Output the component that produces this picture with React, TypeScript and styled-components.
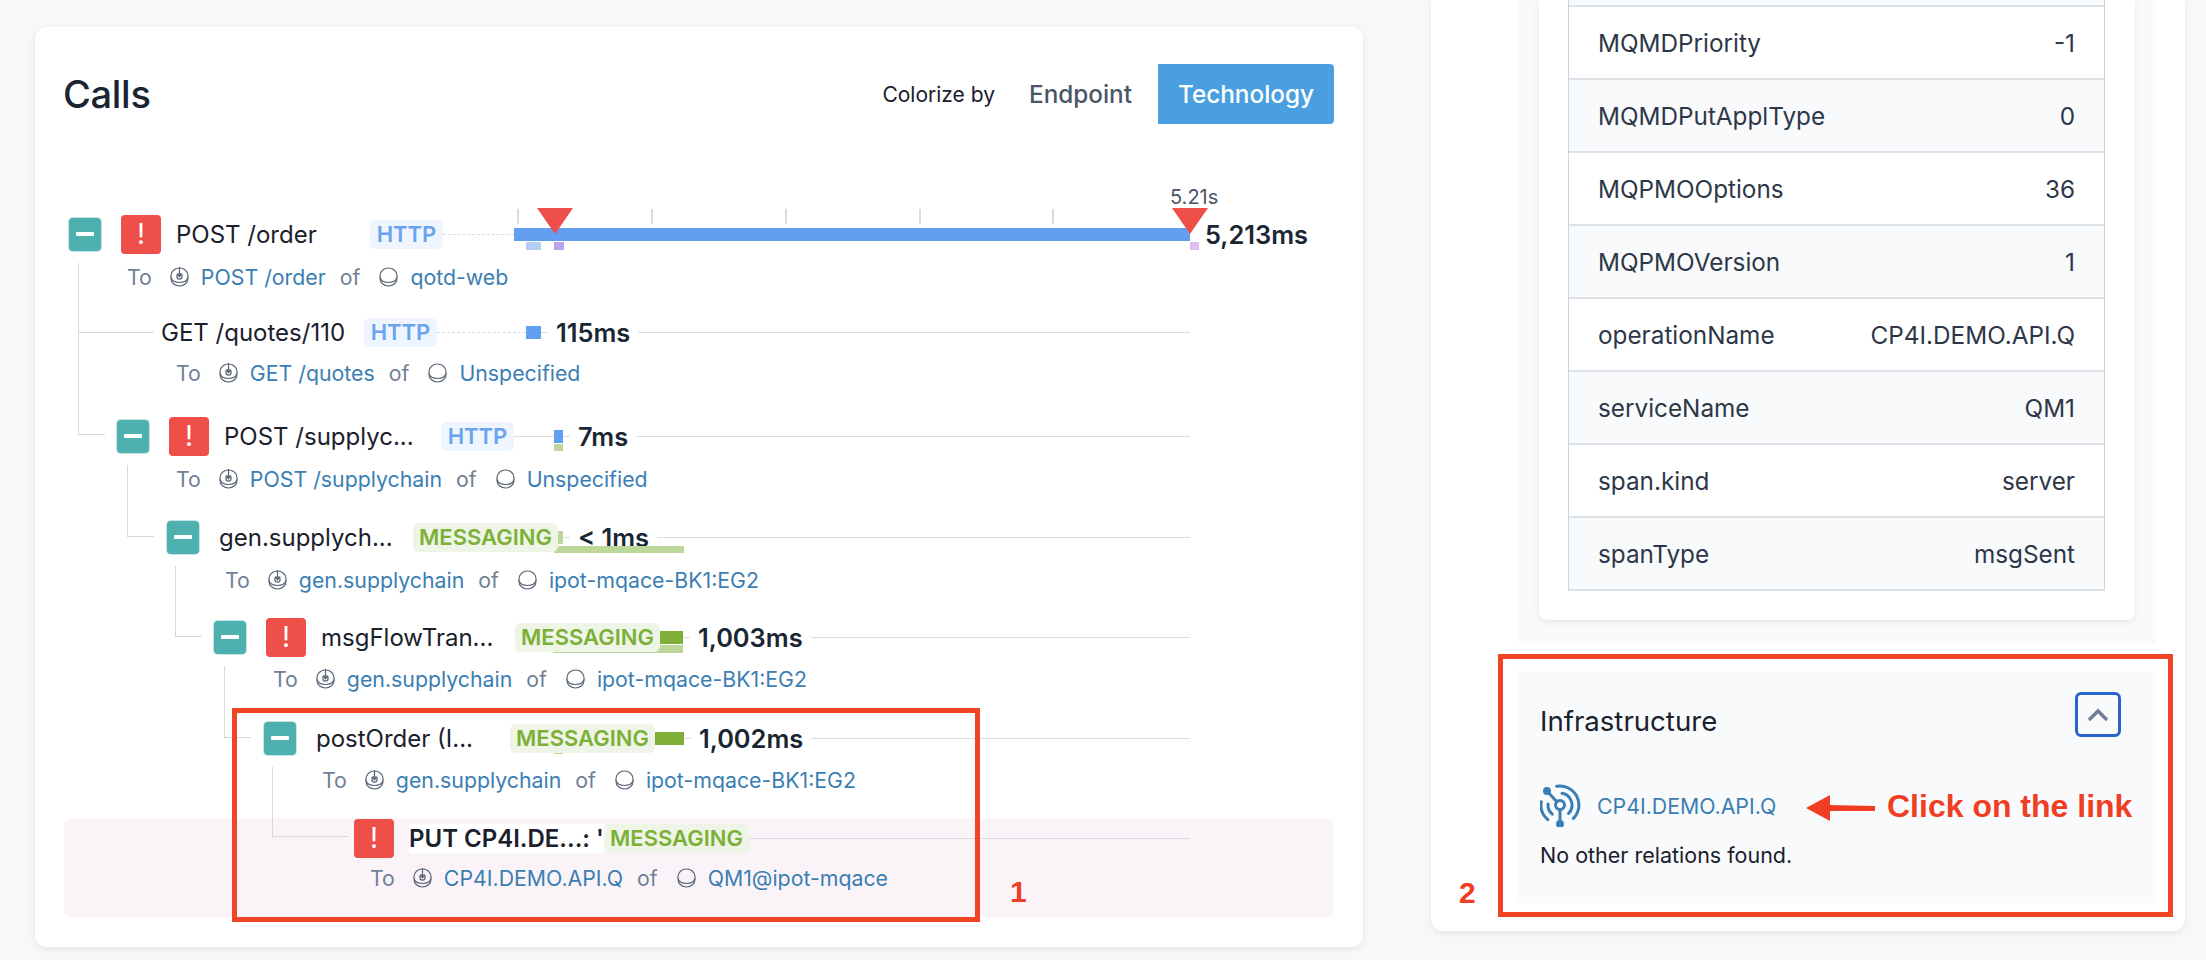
import styled, { createGlobalStyle } from "styled-components";

const GlobalStyle = createGlobalStyle`
  html, body { margin: 0; padding: 0; }
  body {
    background: #f7f8fa;
    font-family: Inter, "Noto Sans", sans-serif;
    color: #1a202c;
    overflow: hidden;
  }
  * { box-sizing: border-box; }
`;

interface Mark {
  left: number;
  top: number;
  width: number;
  height: number;
  color: string;
}

interface Call {
  indent: number;
  collapsible?: boolean;
  error?: boolean;
  name: string;
  nameWidth: number;
  strongName?: boolean;
  tech: "HTTP" | "MESSAGING";
  lead?: number;
  dashed?: boolean;
  barWidth?: number;
  barColor?: string;
  barOverlap?: number;
  marks?: Mark[];
  duration?: string;
  endpoint: string;
  service: string;
  subIndent: number;
  subGap: number;
  after: number;
}

const lightGreen = "#bdd69a";
const darkGreen = "#7fae37";
const blue = "#639ff0";

const calls: Call[] = [
  {
    indent: 5,
    collapsible: true,
    error: true,
    name: "POST /order",
    nameWidth: 194,
    tech: "HTTP",
    lead: 71,
    dashed: true,
    barWidth: 676,
    barColor: blue,
    marks: [
      { left: 12, top: 14, width: 15, height: 8, color: "#b3cff8" },
      { left: 40, top: 14, width: 10, height: 8, color: "#b8a3ec" },
      { left: 676, top: 14, width: 9, height: 8, color: "#dfbdf0" },
    ],
    duration: "5,213ms",
    endpoint: "POST /order",
    service: "qotd-web",
    subIndent: 63,
    subGap: 10,
    after: 24,
  },
  {
    indent: 97,
    name: "GET /quotes/110",
    nameWidth: 203,
    tech: "HTTP",
    lead: 89,
    dashed: true,
    barWidth: 15,
    barColor: blue,
    duration: "115ms",
    endpoint: "GET /quotes",
    service: "Unspecified",
    subIndent: 112,
    subGap: 8,
    after: 32,
  },
  {
    indent: 53,
    collapsible: true,
    error: true,
    name: "POST /supplyc...",
    nameWidth: 217,
    tech: "HTTP",
    lead: 40,
    barWidth: 9,
    barColor: blue,
    marks: [{ left: 0, top: 14, width: 9, height: 7, color: lightGreen }],
    duration: "7ms",
    endpoint: "POST /supplychain",
    service: "Unspecified",
    subIndent: 112,
    subGap: 10,
    after: 27,
  },
  {
    indent: 103,
    collapsible: true,
    name: "gen.supplych...",
    nameWidth: 194,
    tech: "MESSAGING",
    barWidth: 9,
    barColor: lightGreen,
    barOverlap: 4,
    marks: [{ left: 0, top: 15, width: 130, height: 7, color: lightGreen }],
    duration: "< 1ms",
    endpoint: "gen.supplychain",
    service: "ipot-mqace-BK1:EG2",
    subIndent: 161,
    subGap: 10,
    after: 26,
  },
  {
    indent: 150,
    collapsible: true,
    error: true,
    name: "msgFlowTran...",
    nameWidth: 194,
    tech: "MESSAGING",
    barWidth: 23,
    barColor: darkGreen,
    marks: [{ left: -107, top: 14, width: 130, height: 8, color: lightGreen }],
    duration: "1,003ms",
    endpoint: "gen.supplychain",
    service: "ipot-mqace-BK1:EG2",
    subIndent: 209,
    subGap: 9,
    after: 28,
  },
  {
    indent: 200,
    collapsible: true,
    name: "postOrder (I...",
    nameWidth: 194,
    tech: "MESSAGING",
    barWidth: 29,
    barColor: darkGreen,
    marks: [{ left: -101, top: 15, width: 9, height: 7, color: lightGreen }],
    duration: "1,002ms",
    endpoint: "gen.supplychain",
    service: "ipot-mqace-BK1:EG2",
    subIndent: 258,
    subGap: 9,
    after: 27,
  },
  {
    indent: 290,
    error: true,
    name: "PUT CP4I.DE...: '",
    nameWidth: 195,
    strongName: true,
    tech: "MESSAGING",
    endpoint: "CP4I.DEMO.API.Q",
    service: "QM1@ipot-mqace",
    subIndent: 306,
    subGap: 7,
    after: 29,
  },
];

// tree connectors, coordinates are relative to the tree's top left corner
const elbows = [
  { x: 14, y: 49, width: 27, height: 172 },
  { x: 14, y: 118, width: 76, height: 0 },
  { x: 63, y: 251, width: 27, height: 72 },
  { x: 111, y: 352, width: 27, height: 71 },
  { x: 160, y: 452, width: 27, height: 72 },
  { x: 208, y: 553, width: 76, height: 70 },
];

const ticks = [3, 137, 271, 405, 538];

const properties: [string, string][] = [
  ["MQMDPriority", "-1"],
  ["MQMDPutApplType", "0"],
  ["MQPMOOptions", "36"],
  ["MQPMOVersion", "1"],
  ["operationName", "CP4I.DEMO.API.Q"],
  ["serviceName", "QM1"],
  ["span.kind", "server"],
  ["spanType", "msgSent"],
];

const Page = styled.div`
  width: 2206px;
  height: 960px;
  overflow: hidden;
  display: flex;
  align-items: flex-start;
  justify-content: space-between;
  padding: 0 21px 0 35px;
`;

const Card = styled.div`
  background: #fff;
  border-radius: 12px;
  box-shadow: 0 2px 6px rgba(45, 55, 72, 0.1);
`;

const CallsCard = styled(Card)`
  position: relative;
  width: 1328px;
  height: 920px;
  margin-top: 27px;
  padding: 37px 29px 0;
`;

const Header = styled.div`
  display: flex;
  align-items: center;
  height: 60px;
`;

const Title = styled.h2`
  margin: 0 auto 0 -1px;
  font-size: 38px;
  font-weight: 500;
  color: #1a2433;
  letter-spacing: -0.3px;
`;

const ColorizeLabel = styled.span`
  font-size: 21px;
  margin-right: 14px;
  color: #1a202c;
`;

const Toggle = styled.button<{ $active?: boolean }>`
  height: 60px;
  border: 0;
  margin-left: ${(p) => (p.$active ? "6px" : "0")};
  border-radius: ${(p) => (p.$active ? "0 4px 4px 0" : "0")};
  font-family: inherit;
  font-size: 24.3px;
  font-weight: 500;
  padding: 0 20px;
  color: ${(p) => (p.$active ? "#fff" : "#4a5568")};
  background: ${(p) => (p.$active ? "#4a9fe0" : "transparent")};
`;

const Tree = styled.div`
  position: relative;
  margin-top: 90px;
`;

const Block = styled.div<{ $after: number; $highlight?: boolean }>`
  padding-bottom: ${(p) => p.$after}px;
  background: ${(p) => (p.$highlight ? "#faf4f9" : "transparent")};
  border-radius: 8px;
`;

const MainLine = styled.div<{ $indent: number }>`
  display: flex;
  align-items: center;
  height: 40px;
  width: 1126px;
  padding-left: ${(p) => p.$indent}px;
`;

const Collapse = styled.span`
  flex: none;
  display: flex;
  align-items: center;
  justify-content: center;
  width: 32px;
  height: 33px;
  margin-right: 20px;
  background: #4fb1af;
  border-radius: 4px;
  box-shadow: 0 0 0 1px rgba(79, 177, 175, 0.35);

  &::before {
    content: "";
    width: 18px;
    height: 4px;
    border-radius: 1px;
    background: #fff;
  }
`;

const ErrorFlag = styled.span`
  flex: none;
  display: flex;
  align-items: center;
  justify-content: center;
  width: 40px;
  height: 39px;
  margin-right: 15px;
  background: #ee5049;
  border-radius: 4px;
  color: #fff;
  font-size: 28px;
  font-weight: 400;
`;

const Name = styled.span<{ $width: number; $strong?: boolean }>`
  flex: none;
  width: ${(p) => p.$width}px;
  height: 29px;
  line-height: 29px;
  font-size: 24px;
  white-space: nowrap;
  overflow: hidden;
  font-weight: ${(p) => (p.$strong ? 600 : 400)};
  background: ${(p) => (p.$strong ? "#fff" : "transparent")};
  color: #1a202c;
`;

const Badge = styled.span<{ $tech: "HTTP" | "MESSAGING" }>`
  position: relative;
  z-index: 1;
  flex: none;
  display: flex;
  align-items: center;
  justify-content: center;
  height: 29px;
  width: ${(p) => (p.$tech === "HTTP" ? 73 : 145)}px;
  border-radius: 6px;
  font-size: 22px;
  font-weight: 600;
  color: ${(p) => (p.$tech === "HTTP" ? "#6aa3ee" : "#7cb036")};
  background: ${(p) => (p.$tech === "HTTP" ? "#eef5fe" : "#eef5e6")};
`;

const Rule = styled.span<{ $width?: number; $dashed?: boolean }>`
  flex: ${(p) => (p.$width ? "none" : "1")};
  width: ${(p) => (p.$width ? `${p.$width}px` : "auto")};
  border-top: 1px ${(p) => (p.$dashed ? "dashed" : "solid")} #d8dde3;
`;

const Bar = styled.span<{ $width: number; $color: string; $overlap?: number }>`
  position: relative;
  flex: none;
  width: ${(p) => p.$width}px;
  height: 13px;
  margin-left: ${(p) => -(p.$overlap || 0)}px;
  background: ${(p) => p.$color};
`;

const BarMark = styled.span<{ $mark: Mark }>`
  position: absolute;
  left: ${(p) => p.$mark.left}px;
  top: ${(p) => p.$mark.top}px;
  width: ${(p) => p.$mark.width}px;
  height: ${(p) => p.$mark.height}px;
  background: ${(p) => p.$mark.color};
`;

const Tick = styled.span<{ $left: number }>`
  position: absolute;
  left: ${(p) => p.$left}px;
  top: -19px;
  width: 2px;
  height: 15px;
  background: #d8dce0;
`;

const Flag = styled.span<{ $left: number }>`
  position: absolute;
  left: ${(p) => p.$left - 18}px;
  top: -20px;
  width: 0;
  height: 0;
  border-left: 18px solid transparent;
  border-right: 18px solid transparent;
  border-top: 26px solid #ee5049;
`;

const TotalTime = styled.span`
  position: absolute;
  left: 656px;
  top: -43px;
  font-size: 20px;
  color: #4a5568;
`;

const Duration = styled.span<{ $first?: boolean }>`
  flex: none;
  margin: ${(p) => (p.$first ? "0 0 0 15px" : "0 8px")};
  font-size: 25.4px;
  font-weight: 600;
  color: #1a2633;
  white-space: nowrap;
`;

const SubLine = styled.div<{ $indent: number; $gap: number }>`
  display: flex;
  align-items: center;
  height: 24px;
  margin-top: ${(p) => p.$gap}px;
  padding: 1px 0 0 ${(p) => p.$indent}px;
  font-size: 21.3px;
  color: #718096;
`;

const Word = styled.span<{ $before: number }>`
  margin-left: ${(p) => p.$before}px;
`;

const Ref = styled.span`
  margin-left: 12px;
  color: #3b7eb3;
  white-space: nowrap;
`;

const RefIcon = styled.svg<{ $before: number }>`
  flex: none;
  margin-left: ${(p) => p.$before}px;
`;

const Elbow = styled.span<{ $x: number; $y: number; $w: number; $h: number }>`
  position: absolute;
  left: ${(p) => p.$x}px;
  top: ${(p) => p.$y}px;
  width: ${(p) => p.$w}px;
  height: ${(p) => p.$h}px;
  border-left: 1px solid #d5d9de;
  border-bottom: 1px solid #d5d9de;
`;

const DetailsCard = styled(Card)`
  position: relative;
  width: 754px;
  height: 931px;
  border-radius: 0 0 12px 12px;
  padding: 0 29px 0 86px;
`;

const TagsPanel = styled.div`
  height: 643px;
  padding: 0 21px 0 22px;
  background: #f9fafc;
`;

const TagsCard = styled(Card)`
  height: 620px;
  padding: 0 30px 0 29px;
  border-radius: 0 0 8px 8px;
`;

const TagsTable = styled.div`
  border-left: 1px solid #cbd5e0;
  border-right: 1px solid #cbd5e0;
`;

const TagStub = styled.div`
  height: 7px;
  background: #f9fafc;
  border-bottom: 2px solid #dde2e8;
`;

const TagRow = styled.div<{ $shade: boolean }>`
  display: flex;
  align-items: center;
  justify-content: space-between;
  height: 73px;
  padding: 0 29px;
  font-size: 24.3px;
  color: #2d3748;
  background: ${(p) => (p.$shade ? "#f9fafc" : "#fff")};
  border-bottom: 2px solid #dde2e8;
`;

const InfraPanel = styled.div`
  position: relative;
  height: 232px;
  margin-top: 28px;
  padding: 21px 35px 0 23px;
  background: #f9fafc;
`;

const InfraHeader = styled.div`
  display: flex;
  align-items: center;
  justify-content: space-between;
  height: 45px;
`;

const InfraTitle = styled.span`
  margin-top: 12px;
  font-size: 27.6px;
  color: #1a202c;
`;

const ChevronButton = styled.span`
  display: flex;
  align-items: center;
  justify-content: center;
  width: 46px;
  height: 45px;
  border: 3px solid #2a63c9;
  border-radius: 6px;
`;

const InfraLink = styled.div`
  display: flex;
  align-items: center;
  margin-top: 47px;
  font-size: 21.3px;
  color: #3b7eb3;

  svg {
    margin-right: 16px;
  }
`;

const NoRelations = styled.div`
  margin-top: 15px;
  font-size: 21.5px;
  color: #1a202c;
`;

const Outline = styled.span<{ $x: number; $y: number; $w: number; $h: number }>`
  position: absolute;
  left: ${(p) => p.$x}px;
  top: ${(p) => p.$y}px;
  width: ${(p) => p.$w}px;
  height: ${(p) => p.$h}px;
  border: 5px solid #f04425;
  pointer-events: none;
`;

const Note = styled.span<{ $x: number; $y: number; $size: number }>`
  position: absolute;
  left: ${(p) => p.$x}px;
  top: ${(p) => p.$y}px;
  font-family: "Liberation Sans", Arial, sans-serif;
  font-weight: 700;
  font-size: ${(p) => p.$size}px;
  line-height: 1;
  color: #ef3e23;
  white-space: nowrap;
`;

const NoteArrow = styled.svg`
  position: absolute;
  left: 289px;
  top: 123px;
`;

const CoinIcon = ({ before, arrow }: { before: number; arrow?: boolean }) => (
  <RefIcon
    $before={before}
    width="19"
    height="20"
    viewBox="0 0 19 20"
    fill="none"
    stroke="#5b6679"
    strokeWidth="1.2"
  >
    <path d="M1 8.5a8.5 7.5 0 1 1 17 0v3a8.5 7.5 0 0 1-17 0z" />
    <path d="M1 10.5c1 3.6 4.5 5 8.5 5s7.500-1.400 8.500-5" />
    {arrow && (
      <>
        <circle cx="9.5" cy="9.5" r="2.6" />
        <path d="M9.5 0v10M6.8 6.600l2.700 3.200 2.700-3.200" />
      </>
    )}
  </RefIcon>
);

const MqIcon = () => (
  <svg
    width="41"
    height="43"
    viewBox="0 0 41 43"
    fill="none"
    stroke="#3b7eb3"
    strokeWidth="3"
    strokeLinecap="round"
  >
    <path d="M16.7 2.3A19 19 0 0 1 33.4 34.4" />
    <path d="M1.3 17.7A19 19 0 0 0 7.8 35.6" />
    <path d="M22 9.2A12 12 0 0 1 28.5 29.5" />
    <path d="M8 20A12 12 0 0 0 12.3 30.2" />
    <circle cx="20" cy="21" r="4.5" />
    <path d="M20 26v14M7 7l10 11" />
    <circle cx="7" cy="7" r="2.5" fill="#3b7eb3" />
    <circle cx="20" cy="40" r="2.5" fill="#3b7eb3" />
  </svg>
);

const CallRow = ({ call, first }: { call: Call; first: boolean }) => (
  <Block $after={call.after} $highlight={call.strongName}>
    <MainLine $indent={call.indent}>
      {call.collapsible && <Collapse />}
      {call.error && <ErrorFlag>!</ErrorFlag>}
      <Name $width={call.nameWidth} $strong={call.strongName}>
        {call.name}
      </Name>
      <Badge $tech={call.tech}>{call.tech}</Badge>
      {call.lead && <Rule $width={call.lead} $dashed={call.dashed} />}
      {call.barWidth && call.barColor && (
        <Bar
          $width={call.barWidth}
          $color={call.barColor}
          $overlap={call.barOverlap}
        >
          {call.marks?.map((mark) => (
            <BarMark key={mark.left} $mark={mark} />
          ))}
          {first && ticks.map((left) => <Tick key={left} $left={left} />)}
          {first && <TotalTime>5.21s</TotalTime>}
          {first && <Flag $left={41} />}
          {first && <Flag $left={676} />}
        </Bar>
      )}
      {call.duration && !first && <Rule $width={7} />}
      {call.duration && <Duration $first={first}>{call.duration}</Duration>}
      {!first && <Rule />}
    </MainLine>
    <SubLine $indent={call.subIndent} $gap={call.subGap}>
      <span>To</span>
      <CoinIcon before={18} arrow />
      <Ref>{call.endpoint}</Ref>
      <Word $before={14}>of</Word>
      <CoinIcon before={19} />
      <Ref>{call.service}</Ref>
    </SubLine>
  </Block>
);

export default function App() {
  return (
    <>
      <GlobalStyle />
      <Page>
        <CallsCard>
          <Header>
            <Title>Calls</Title>
            <ColorizeLabel>Colorize by</ColorizeLabel>
            <Toggle>Endpoint</Toggle>
            <Toggle $active>Technology</Toggle>
          </Header>
          <Tree>
            {calls.map((call, index) => (
              <CallRow key={call.name} call={call} first={index === 0} />
            ))}
            {elbows.map((elbow) => (
              <Elbow
                key={`${elbow.x}-${elbow.y}`}
                $x={elbow.x}
                $y={elbow.y}
                $w={elbow.width}
                $h={elbow.height}
              />
            ))}
          </Tree>
          <Outline $x={197} $y={681} $w={748} $h={214} />
          <Note $x={975} $y={850} $size={30}>
            1
          </Note>
        </CallsCard>
        <DetailsCard>
          <TagsPanel>
            <TagsCard>
              <TagsTable>
                <TagStub />
                {properties.map(([key, value], index) => (
                  <TagRow key={key} $shade={index % 2 === 1}>
                    <span>{key}</span>
                    <span>{value}</span>
                  </TagRow>
                ))}
              </TagsTable>
            </TagsCard>
          </TagsPanel>
          <InfraPanel>
            <InfraHeader>
              <InfraTitle>Infrastructure</InfraTitle>
              <ChevronButton>
                <svg
                  width="22"
                  height="14"
                  viewBox="0 0 22 14"
                  fill="none"
                  stroke="#718096"
                  strokeWidth="3.5"
                >
                  <path d="M2 12l9-9 9 9" />
                </svg>
              </ChevronButton>
            </InfraHeader>
            <InfraLink>
              <MqIcon />
              CP4I.DEMO.API.Q
            </InfraLink>
            <NoRelations>No other relations found.</NoRelations>
            <NoteArrow width="69" height="28" viewBox="0 0 69 28">
              <path d="M0 14 L24 1 V11 L69 12 V17 L24 17 V27 Z" fill="#ef3e23" />
            </NoteArrow>
            <Note $x={370} $y={119} $size={32}>
              Click on the link
            </Note>
          </InfraPanel>
          <Outline $x={67} $y={654} $w={675} $h={263} />
          <Note $x={28} $y={878} $size={30}>
            2
          </Note>
        </DetailsCard>
      </Page>
    </>
  );
}
